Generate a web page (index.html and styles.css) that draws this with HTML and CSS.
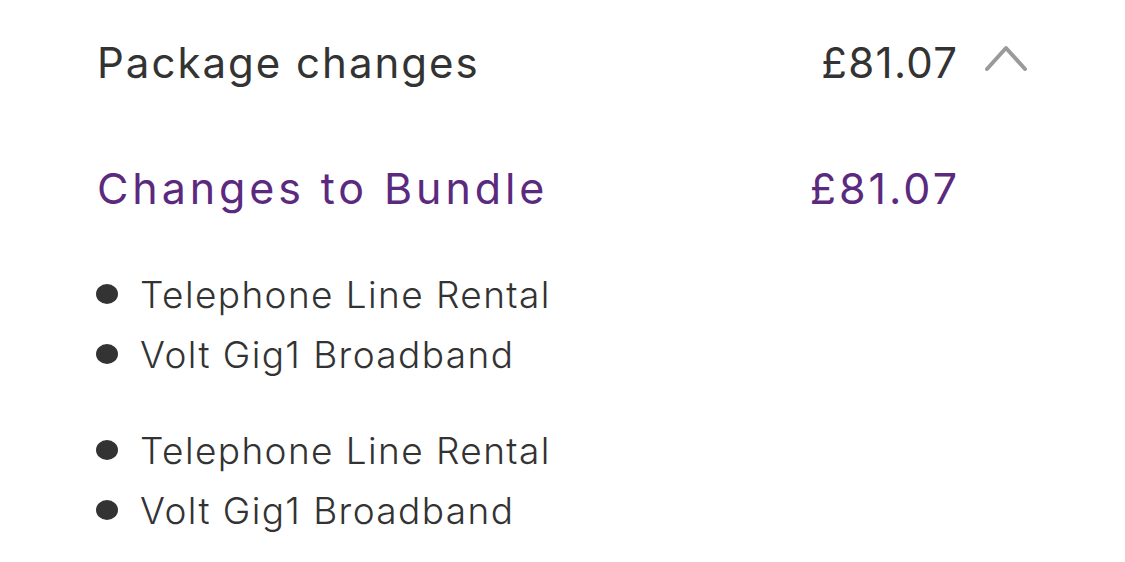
FILE: index.html
```html
<!DOCTYPE html>
<html>
<head>
<meta charset="utf-8">
<link rel="stylesheet" href="styles.css">
</head>
<body>
<div class="panel">
  <div class="header">
    <div class="title">Package changes</div>
    <div class="header-right">
      <div class="price">£81.07</div>
      <svg class="chevron" width="44" height="30" viewBox="0 0 44 30"><path d="M3 26 L22 5 L41 26" fill="none" stroke="#9a9a9a" stroke-width="4" stroke-linecap="round" stroke-linejoin="round"/></svg>
    </div>
  </div>
  <div class="section">
    <div class="section-title">Changes to Bundle</div>
    <div class="section-price">£81.07</div>
  </div>
  <ul class="items">
    <li>Telephone Line Rental</li>
    <li>Volt Gig1 Broadband</li>
  </ul>
  <ul class="items">
    <li>Telephone Line Rental</li>
    <li>Volt Gig1 Broadband</li>
  </ul>
</div>
</body>
</html>
```
FILE: styles.css
```css
html, body { margin: 0; padding: 0; background: #fff; }
body { font-family: "Inter", "Open Sans", sans-serif; color: #333; }
.panel { padding: 30px 0 0 97px; width: 931px; }
.header { display: flex; align-items: center; justify-content: space-between; height: 64px; }
.title { font-size: 42px; font-weight: 400; letter-spacing: 2px; }
.header-right { display: flex; align-items: center; gap: 27px; }
.price { font-size: 42px; font-weight: 400; letter-spacing: 1.3px; margin-right: -1.3px; }
.chevron { margin-top: -8px; }
.section { display: flex; justify-content: space-between; align-items: center; width: 860px; margin-top: 62px; height: 64px; color: #5b2a7e; }
.section-title { font-size: 43px; letter-spacing: 3.9px; }
.section-price { font-size: 43px; letter-spacing: 3px; margin-right: -3px; }
.items { list-style: none; margin: 0; padding: 0; }
.items:first-of-type { margin-top: 44px; }
.items + .items { margin-top: 36px; }
.items li { display: flex; align-items: center; height: 60px; font-size: 37px; font-weight: 300; letter-spacing: 1.4px; }
.items li::before { content: ""; width: 22px; height: 20px; border-radius: 50%; background: #333; margin-right: 22px; margin-left: -1px; }
```
